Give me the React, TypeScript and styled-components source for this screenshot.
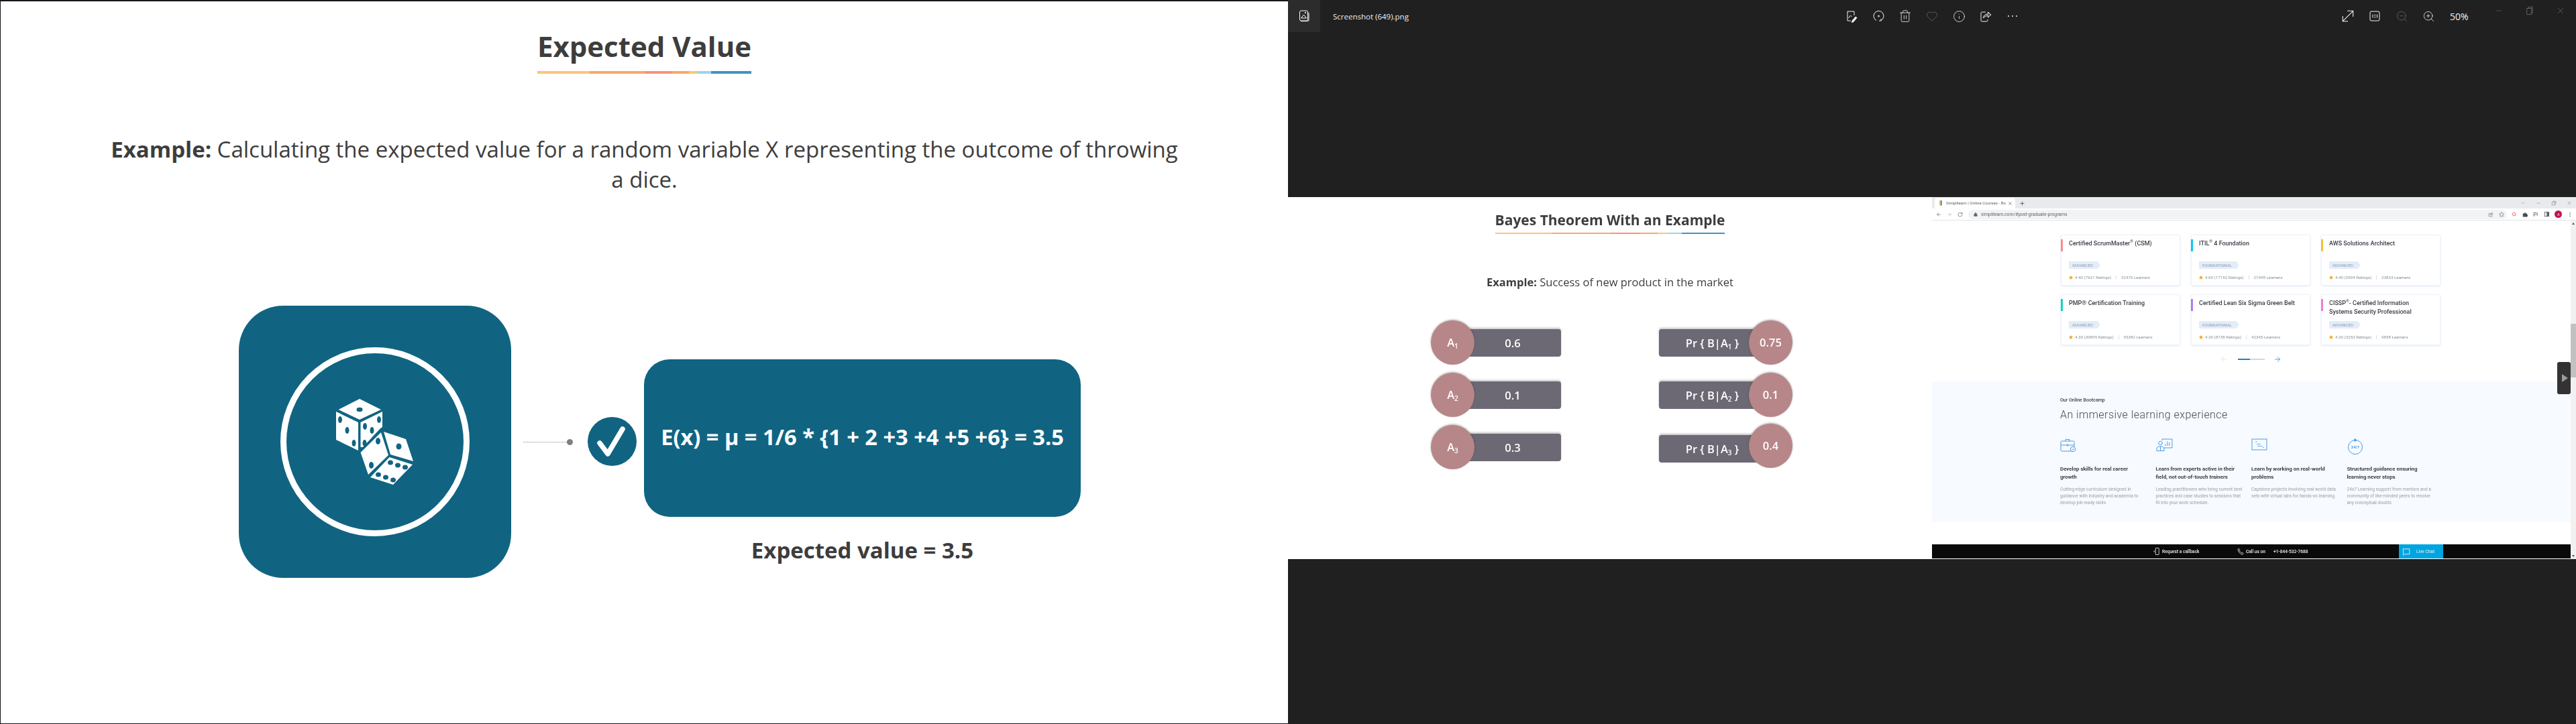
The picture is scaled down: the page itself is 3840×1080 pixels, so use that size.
import React from 'react'
import styled, { createGlobalStyle } from 'styled-components'
import { ArrowLeft, ArrowRight, ChevronDown, Heart, Info, Lock, Minus, MoreVertical, Plus, RotateCw, Star, Trash2, X, ZoomIn, ZoomOut } from 'lucide-react'

const GlobalStyle = createGlobalStyle`
  html, body {
    margin: 0;
    padding: 0;
    background: #202020;
  }
  * {
    box-sizing: border-box;
  }
`

const Page = styled.div`
  display: grid;
  grid-template-columns: 1920px 1920px;
  width: 3840px;
  height: 1080px;
  overflow: hidden;
  font-family: 'Open Sans', 'Liberation Sans', sans-serif;
`

/* left slide */
const MainSlide = styled.section`
  display: flex;
  flex-direction: column;
  align-items: center;
  height: 1080px;
  padding-top: 45px;
  background: #fff;
  border-top: 2px solid #14161a;
  border-left: 1px solid #14161a;
  border-bottom: 1px solid #14161a;
  color: #3d3d3d;
`

const SlideTitle = styled.div<{ $small?: boolean }>`
  display: flex;
  flex-direction: column;
  align-items: stretch;
  font-weight: 700;
  font-size: ${(p) => (p.$small ? '21px' : '42px')};
  line-height: ${(p) => (p.$small ? '24px' : '44px')};
  gap: ${(p) => (p.$small ? '7px' : '15px')};
  text-align: center;
  white-space: nowrap;
`

const RainbowRule = styled.div<{ $height: number }>`
  height: ${(p) => p.$height}px;
  background: linear-gradient(
    90deg,
    #fdc47a 0 24.6%,
    #fba66b 24.6% 50.4%,
    #f9927a 50.4% 63.1%,
    #fba66b 63.1% 70.8%,
    #fdc47a 70.8% 75%,
    #9cd4ee 75% 81.2%,
    #3f93c6 81.2% 100%
  );
`

const ExampleText = styled.p`
  width: 1600px;
  margin: 90px 0 0;
  font-size: 33px;
  line-height: 45px;
  text-align: center;

  b {
    font-weight: 700;
  }
`

const Diagram = styled.div`
  display: flex;
  align-items: flex-start;
  align-self: flex-start;
  margin: 166px 0 0 355px;
`

const DiceTile = styled.div`
  display: flex;
  align-items: center;
  justify-content: center;
  width: 406px;
  height: 406px;
  border-radius: 66px;
  background: #106482;
`

const DiceRing = styled.div`
  display: flex;
  align-items: center;
  justify-content: center;
  width: 282px;
  height: 282px;
  border: 9px solid #fff;
  border-radius: 50%;
`

const FormulaArea = styled.div`
  display: flex;
  align-items: flex-start;
  margin-top: 80px;
`

const Connector = styled.div`
  display: flex;
  align-items: center;
  width: 74px;
  height: 9px;
  margin: 119px 22px 0 18px;
`

const DottedLine = styled.div`
  flex: 1;
  border-top: 1px dotted #8a8a8a;
`

const ConnectorDot = styled.div`
  width: 9px;
  height: 9px;
  border-radius: 50%;
  background: #7f7f7f;
`

const CheckBadge = styled.div`
  display: flex;
  width: 73px;
  height: 73px;
  margin: 86px 11px 0 0;
  border-radius: 50%;
  background: #106482;
`

const FormulaColumn = styled.div`
  display: flex;
  flex-direction: column;
  align-items: center;
`

const FormulaBox = styled.div`
  display: flex;
  align-items: center;
  justify-content: center;
  width: 651px;
  height: 235px;
  padding-bottom: 4px;
  border-radius: 38px;
  background: #106482;
  color: #fff;
  font-size: 32.6px;
  font-weight: 700;
  white-space: nowrap;
`

const ResultText = styled.div`
  margin-top: 28px;
  font-size: 33px;
  line-height: 44px;
  font-weight: 700;
`

/* right side: photo viewer */
const Viewer = styled.section`
  display: flex;
  flex-direction: column;
  height: 1080px;
  background: #202020;
  color: #fff;
`

const ViewerBar = styled.header`
  display: flex;
  align-items: center;
  height: 48px;
  flex: none;
`

const AppTile = styled.div`
  display: flex;
  align-items: center;
  justify-content: center;
  width: 48px;
  height: 48px;
  background: #2c2c2c;
`

const FileName = styled.div`
  width: 772px;
  padding-left: 19px;
  font-size: 11.5px;
  color: #f0f0f0;
`

const ToolGroup = styled.div<{ $gapLeft?: number }>`
  display: flex;
  margin-left: ${(p) => p.$gapLeft ?? 0}px;
`

const ToolButton = styled.div<{ $dim?: boolean }>`
  display: flex;
  align-items: center;
  justify-content: center;
  width: 40px;
  height: 48px;
  color: ${(p) => (p.$dim ? '#6a6a6a' : '#f2f2f2')};
`

const ZoomLabel = styled.div`
  width: 50px;
  margin-left: 12px;
  font-size: 14px;
  color: #f2f2f2;
`

const WindowButtons = styled.div`
  display: flex;
  align-self: flex-start;
`

const WindowButton = styled.div`
  display: flex;
  align-items: center;
  justify-content: center;
  width: 46px;
  height: 32px;
  color: #7b7b7b;
`

const ShotRow = styled.div`
  display: grid;
  grid-template-columns: 960px 960px;
  height: 540px;
  margin-top: 246px;
`

const BayesSlide = styled.div`
  display: flex;
  flex-direction: column;
  align-items: center;
  padding-top: 22px;
  background: #fff;
  color: #3d3d3d;
  filter: blur(0.3px);
`

const BayesExample = styled.div`
  margin-top: 60px;
  font-size: 16.5px;
  line-height: 24px;

  b {
    font-weight: 700;
  }
`

const BayesGrid = styled.div`
  display: flex;
  gap: 146px;
  align-self: flex-start;
  margin: 45px 0 0 213px;
`

const BayesColumn = styled.div`
  display: flex;
  flex-direction: column;
  gap: 12px;
`

const BayesRow = styled.div<{ $lift?: number }>`
  display: flex;
  align-items: center;
  margin-top: ${(p) => -(p.$lift ?? 0)}px;
`

const Bubble = styled.div`
  position: relative;
  z-index: 1;
  flex: none;
  width: 65px;
  height: 66px;
  border-radius: 50%;
  background: #b78688;
  box-shadow: 0 -1px 3px rgba(60, 50, 50, 0.45);
  color: #fff;
  font-size: 16.5px;
  line-height: 66px;
  font-weight: 600;
  text-align: center;
`

const BayesBar = styled.div<{ $side: 'left' | 'right'; $drop?: number }>`
  height: 41px;
  margin-top: ${(p) => p.$drop ?? 0}px;
  border-radius: ${(p) => (p.$side === 'left' ? '0 4px 4px 0' : '4px 0 0 4px')};
  background: #6c6975;
  box-shadow: 0 -2px 3px rgba(90, 90, 90, 0.35);
  color: #fff;
  font-size: 16.5px;
  line-height: 41px;
  font-weight: 600;
  text-align: center;
  white-space: nowrap;
  ${(p) =>
    p.$side === 'left'
      ? 'width: 162px; margin-left: -33px; padding-left: 18px;'
      : 'width: 167px; margin-right: -33px; padding-right: 8px;'}
`

const Sub = styled.sub`
  font-size: 10px;
  line-height: 0;
  vertical-align: -3px;
`

/* browser inside the screenshot */
const BrowserShot = styled.div`
  display: flex;
  flex-direction: column;
  background: #fff;
  font-family: Roboto, 'Liberation Sans', sans-serif;
  filter: blur(0.4px);
`

const TabStrip = styled.div`
  display: flex;
  align-items: flex-end;
  height: 17px;
  padding-left: 4px;
  background: #e8eaed;
`

const ActiveTab = styled.div`
  display: flex;
  align-items: center;
  width: 120px;
  height: 16px;
  padding: 0 4px 0 7px;
  border-radius: 4px 4px 0 0;
  background: #fff;
  color: #5f6368;
  font-size: 6.2px;
  white-space: nowrap;
`

const TabFavicon = styled.div`
  flex: none;
  width: 4px;
  height: 8px;
  margin-right: 6px;
  border-radius: 0 0 2px 2px;
  background: linear-gradient(90deg, #f4b942 50%, #4a9be8 50%);
`

const TabTitle = styled.span`
  flex: 1;
  overflow: hidden;
`

const NewTab = styled.div`
  display: flex;
  align-items: center;
  height: 16px;
  margin-left: 6px;
  color: #444;
`

const ChromeControls = styled.div`
  display: flex;
  align-items: center;
  gap: 15px;
  height: 16px;
  margin: 0 6px 0 auto;
  color: #9a9da3;
`

const Toolbar = styled.div`
  display: flex;
  align-items: center;
  height: 18px;
  padding: 0 5px 0 6px;
  border-bottom: 1px solid #e3e5e8;
  background: #fff;
  color: #5f6368;
`

const NavIcons = styled.div`
  display: flex;
  align-items: center;
  gap: 8px;
  width: 48px;
`

const Omnibox = styled.div`
  display: flex;
  align-items: center;
  gap: 8px;
  width: 803px;
  height: 14px;
  padding: 0 4px 0 8px;
  border-radius: 7px;
  background: #f1f3f4;
  font-size: 6.8px;
  color: #5f6368;
`

const Address = styled.span`
  margin-left: -3px;
  flex: 1;
`

const ExtensionIcons = styled.div`
  display: flex;
  align-items: center;
  justify-content: space-between;
  width: 92px;
  margin-left: 6px;
`

const Avatar = styled.div`
  display: flex;
  align-items: center;
  justify-content: center;
  width: 11px;
  height: 11px;
  border-radius: 50%;
  background: #c2134f;
  color: #fff;
  font-size: 5px;
`

const Viewport = styled.div`
  position: relative;
  display: flex;
  flex: 1;
`

const PageContent = styled.div`
  display: flex;
  flex-direction: column;
  flex: 1;
`

const CardGrid = styled.div`
  display: grid;
  grid-template-columns: repeat(3, 178px);
  grid-auto-rows: 76px;
  column-gap: 16px;
  row-gap: 13px;
  margin: 21px 0 0 192px;
`

const Card = styled.div`
  position: relative;
  padding: 6px 15px 0 11px;
  border: 1px solid #edf3fb;
  border-radius: 2px;
  box-shadow: 0 1px 3px rgba(100, 150, 220, 0.2);
`

const CardAccent = styled.div<{ $color: string }>`
  position: absolute;
  top: 6px;
  left: -1px;
  width: 3px;
  height: 18px;
  background: ${(p) => p.$color};
`

const CardTitle = styled.div`
  height: 33px;
  font-size: 9px;
  line-height: 13px;
  font-weight: 500;
  color: #3a3d46;

  sup {
    font-size: 6px;
    line-height: 0;
    font-weight: 400;
  }
`

const LevelTag = styled.div`
  width: fit-content;
  height: 11px;
  padding: 0 11px 0 5px;
  background: #e3edf8;
  clip-path: polygon(0 0, calc(100% - 4px) 0, 100% 50%, calc(100% - 4px) 100%, 0 100%);
  color: #8b98ad;
  font-size: 6px;
  line-height: 11px;
`

const CardStats = styled.div`
  display: flex;
  align-items: center;
  height: 8px;
  margin-top: 9px;
  color: #8b8e96;
  font-size: 6.2px;
  white-space: nowrap;

  svg {
    margin-right: 3px;
  }
`

const StatDivider = styled.span`
  width: 1px;
  height: 6px;
  margin: 0 7px;
  background: #dcdfe4;
`

const Pager = styled.div`
  display: flex;
  align-items: center;
  height: 8px;
  margin: 17px 0 0 429px;
`

const PagerTrack = styled.div`
  width: 40px;
  height: 2px;
  margin: 0 13px 0 15px;
  background: #d6d6d6;
`

const PagerFill = styled.div`
  width: 18px;
  height: 2px;
  background: #1a7de0;
`

const LearningSection = styled.div`
  height: 210px;
  margin-top: 29px;
  padding: 23px 0 0 191px;
  background: #f7fafe;
`

const Eyebrow = styled.div`
  font-size: 7px;
  line-height: 10px;
  font-weight: 500;
  color: #3f424a;
`

const SectionHeading = styled.div`
  margin-top: 6px;
  font-size: 16px;
  line-height: 22px;
  font-weight: 300;
  letter-spacing: 0.45px;
  color: #474a52;
`

const FeatureGrid = styled.div`
  display: grid;
  grid-template-columns: repeat(4, 142.5px);
  margin-top: 24px;
`

const FeatureIcon = styled.div`
  height: 20px;
`

const FeatureTitle = styled.div`
  width: 122px;
  margin-top: 20px;
  font-size: 7.9px;
  line-height: 12px;
  font-weight: 700;
  color: #3a3d46;
`

const FeatureText = styled.div`
  width: 130px;
  margin-top: 7px;
  font-size: 6.6px;
  line-height: 10px;
  color: #9a9ea6;
`

const CallBar = styled.div`
  display: flex;
  align-items: center;
  height: 21px;
  margin-top: 33px;
  padding-left: 330px;
  background: #0a0a0a;
  color: #f2f2f2;
  font-size: 6.6px;
  font-weight: 500;
  white-space: nowrap;
`

const CallItem = styled.div<{ $width: number }>`
  display: flex;
  align-items: center;
  gap: 2px;
  width: ${(p) => p.$width}px;
`

const PhoneNumber = styled.span`
  margin-left: 10px;
`

const ChatButton = styled.div`
  display: flex;
  align-items: center;
  gap: 9px;
  align-self: stretch;
  width: 66px;
  padding-left: 5px;
  background: #00a5df;
  font-weight: 400;
`

const Scrollbar = styled.div`
  display: flex;
  flex-direction: column;
  align-items: center;
  justify-content: space-between;
  flex: none;
  width: 8px;
  padding: 3px 0;
  background: #f1f1f1;
`

const ScrollThumb = styled.div`
  position: absolute;
  top: 154px;
  right: 0;
  width: 8px;
  height: 80px;
  background: #c1c1c1;
`

const ScrollArrow = styled.div<{ $down?: boolean }>`
  width: 0;
  height: 0;
  border-left: 2px solid transparent;
  border-right: 2px solid transparent;
  ${(p) => (p.$down ? 'border-top: 3px solid #555;' : 'border-bottom: 3px solid #555;')}
`

const SideHandle = styled.div`
  position: absolute;
  top: 211px;
  right: 8px;
  display: flex;
  align-items: center;
  justify-content: center;
  width: 20px;
  height: 48px;
  border-radius: 3px;
  background: #333;
`

const HandleArrow = styled.div`
  width: 0;
  height: 0;
  margin-left: 2px;
  border-top: 6px solid transparent;
  border-bottom: 6px solid transparent;
  border-left: 9px solid #9a9a9a;
`

const DiceIcon = () => (
  <svg width="118" height="130" viewBox="0 0 118 130">
    <g fill="#fff">
      <polygon points="36,1 68,17 36,32 4.5,17" />
      <polygon points="1,20 34,36 34,78 1,62" />
      <polygon points="37.5,36 70,20 70,43 67,45 41,73 37.5,73" />
      <polygon points="68,51 79,85 49,114 37.5,81" />
      <polygon points="72,50 105,61 116,94 82,84" />
      <polygon points="80.5,88 115,99 86,129 52,118" />
    </g>
    <g fill="#106482">
      <ellipse cx="36" cy="17" rx="4.5" ry="3.2" />
      <ellipse cx="7" cy="32" rx="3" ry="5" />
      <ellipse cx="17.5" cy="48" rx="3" ry="5" />
      <ellipse cx="27.5" cy="67" rx="3" ry="5" />
      <ellipse cx="65" cy="32" rx="3" ry="5" />
      <ellipse cx="54.5" cy="48" rx="3" ry="5" />
      <ellipse cx="44" cy="42" rx="3" ry="5" />
      <ellipse cx="43.5" cy="67" rx="3" ry="5" />
      <ellipse cx="63.5" cy="64" rx="3.5" ry="5" />
      <ellipse cx="53.5" cy="100" rx="3.5" ry="5" />
      <ellipse cx="94.5" cy="72" rx="4" ry="4.5" />
      <ellipse cx="82" cy="96" rx="4" ry="3.6" />
      <ellipse cx="93" cy="100" rx="4" ry="3.6" />
      <ellipse cx="104" cy="103" rx="4" ry="3.6" />
      <ellipse cx="64" cy="114" rx="4" ry="3.6" />
      <ellipse cx="75" cy="118" rx="4" ry="3.6" />
      <ellipse cx="86" cy="122" rx="4" ry="3.6" />
    </g>
  </svg>
)

const CheckMark = () => (
  <svg width="73" height="73" viewBox="0 0 73 73">
    <path d="M18 39 L30 55 L52 18" fill="none" stroke="#fff" strokeWidth="7.5" strokeLinecap="round" strokeLinejoin="round" />
  </svg>
)

const Glyph = ({ children, size = 20 }: { children: React.ReactNode; size?: number }) => (
  <svg width={size} height={size} viewBox="0 0 20 20" fill="none" stroke="currentColor" strokeWidth="1">
    {children}
  </svg>
)

const cards = [
  { title: <>Certified ScrumMaster<sup>®</sup> (CSM)</>, accent: '#fb8b8b', level: 'ADVANCED', rating: '4.40 (7621 Ratings)', learners: '32476 Learners' },
  { title: <>ITIL<sup>®</sup> 4 Foundation</>, accent: '#10c8e8', level: 'FOUNDATIONAL', rating: '4.60 (17192 Ratings)', learners: '21498 Learners' },
  { title: <>AWS Solutions Architect</>, accent: '#f3bf3f', level: 'ADVANCED', rating: '4.40 (5594 Ratings)', learners: '23833 Learners' },
  { title: <>PMP® Certification Training</>, accent: '#0fd6bc', level: 'ADVANCED', rating: '4.30 (30895 Ratings)', learners: '95382 Learners' },
  { title: <>Certified Lean Six Sigma Green Belt</>, accent: '#a97ff0', level: 'FOUNDATIONAL', rating: '4.30 (8738 Ratings)', learners: '42345 Learners' },
  { title: <>CISSP<sup>®</sup>- Certified Information Systems Security Professional</>, accent: '#ee7ed2', level: 'ADVANCED', rating: '4.30 (3253 Ratings)', learners: '9858 Learners' },
]

const priors = [
  { id: 1, value: '0.6' },
  { id: 2, value: '0.1' },
  { id: 3, value: '0.3' },
]

const likelihoods = [
  { id: 1, value: '0.75', lift: 0, drop: 0 },
  { id: 2, value: '0.1', lift: 0, drop: 0 },
  { id: 3, value: '0.4', lift: 2, drop: 9 },
]

const BLUE = '#4a9be8'

const features = [
  {
    title: 'Develop skills for real career growth',
    text: 'Cutting-edge curriculum designed in guidance with industry and academia to develop job-ready skills',
    icon: (
      <svg width="24" height="21" viewBox="0 0 24 21" fill="none" stroke={BLUE}>
        <rect x="1" y="4" width="20" height="15" rx="1.5" />
        <path d="M8 4V1.5h6V4M1 10h20" />
        <circle cx="11" cy="10" r="1.2" fill="#fff" />
        <circle cx="19" cy="16" r="3.7" fill="#f7fafe" />
        <path d="M17.4 16l1.2 1.2 2-2.2" />
      </svg>
    ),
  },
  {
    title: 'Learn from experts active in their field, not out-of-touch trainers',
    text: 'Leading practitioners who bring current best practices and case studies to sessions that fit into your work schedule.',
    icon: (
      <svg width="25" height="20" viewBox="0 0 25 20" fill="none" stroke={BLUE}>
        <path d="M9 3V1h15v13H12" />
        <path d="M14 11V8M17 11V4.500M20 11V6" />
        <circle cx="6.5" cy="7" r="2.8" />
        <path d="M1 18.500v-3.500c0-2 2-3 5.500-3s5.500 1 5.500 3v3.500z" />
        <path d="M6.500 12v6" />
      </svg>
    ),
  },
  {
    title: 'Learn by working on real-world problems',
    text: 'Capstone projects involving real world data sets with virtual labs for hands-on learning',
    icon: (
      <svg width="24" height="18" viewBox="0 0 24 18" fill="none" stroke={BLUE}>
        <rect x="1" y="1" width="22" height="16" />
        <path d="M6 5h3M8 8.500h6M9 11.500h8M17 13.500h2" strokeWidth="0.8" />
      </svg>
    ),
  },
  {
    title: 'Structured guidance ensuring learning never stops',
    text: '24x7 Learning support from mentors and a community of like-minded peers to resolve any conceptual doubts',
    icon: (
      <svg width="24" height="24" viewBox="0 0 24 24" fill="none" stroke={BLUE}>
        <circle cx="12" cy="13" r="10.5" />
        <path d="M11 0.500l3 2-3 2z" fill={BLUE} />
        <text x="12" y="15" textAnchor="middle" fontSize="6" fontWeight="700" fill={BLUE} stroke="none" fontFamily="Roboto, sans-serif">24/7</text>
      </svg>
    ),
  },
]

const App: React.FC = () => {
  return (
    <Page>
      <GlobalStyle />
      <MainSlide>
        <SlideTitle>
          Expected Value
          <RainbowRule $height={4} />
        </SlideTitle>
        <ExampleText>
          <b>Example:</b> Calculating the expected value for a random variable X representing the outcome of throwing a dice.
        </ExampleText>
        <Diagram>
          <DiceTile>
            <DiceRing>
              <DiceIcon />
            </DiceRing>
          </DiceTile>
          <FormulaArea>
            <Connector>
              <DottedLine />
              <ConnectorDot />
            </Connector>
            <CheckBadge>
              <CheckMark />
            </CheckBadge>
            <FormulaColumn>
              <FormulaBox>{'E(x) = μ = 1/6 * {1 + 2 +3 +4 +5 +6} = 3.5'}</FormulaBox>
              <ResultText>Expected value = 3.5</ResultText>
            </FormulaColumn>
          </FormulaArea>
        </Diagram>
      </MainSlide>

      <Viewer>
        <ViewerBar>
          <AppTile>
            <Glyph size={20}>
              <rect x="3.5" y="2" width="12" height="15" rx="2" />
              <path d="M5 17.500h10.500a1.500 1.500 0 0 0 1.500-1.500V5" />
              <path d="M5.500 13l4-5 4 5z" />
              <circle cx="12" cy="5" r="0.8" />
            </Glyph>
          </AppTile>
          <FileName>Screenshot (649).png</FileName>
          <ToolGroup>
            <ToolButton>
              <Glyph>
                <path d="M14 9V3H4v14h5" />
                <path d="M5.500 13l3-4 2 2" />
                <path d="M11 17l5-6 2 1.500-5 6-2.500 1z" fill="currentColor" />
              </Glyph>
            </ToolButton>
            <ToolButton>
              <Glyph>
                <path d="M7 16.500A7.500 7.500 0 1 1 14 16.500" />
                <circle cx="10.5" cy="10" r="1" />
                <path d="M14 14v3h-3" />
              </Glyph>
            </ToolButton>
            <ToolButton><Trash2 size={20} strokeWidth={1} /></ToolButton>
            <ToolButton $dim><Heart size={18} strokeWidth={1} /></ToolButton>
            <ToolButton><Info size={19} strokeWidth={1} /></ToolButton>
            <ToolButton>
              <Glyph>
                <path d="M10 4H4.500a1.500 1.500 0 0 0-1.500 1.500v11a1.500 1.500 0 0 0 1.500 1.500h7a1.500 1.500 0 0 0 1.500-1.500V15" />
                <path d="M6.500 13c0-4 3-6 7-6V4l4.500 4-4.500 4V9.500c-3 0-5 1-7 3.500z" fill="currentColor" fillOpacity="0.2" />
              </Glyph>
            </ToolButton>
            <ToolButton>
              <Glyph size={20}>
                <circle cx="4" cy="10" r="1" fill="currentColor" stroke="none" />
                <circle cx="10" cy="10" r="1" fill="currentColor" stroke="none" />
                <circle cx="16" cy="10" r="1" fill="currentColor" stroke="none" />
              </Glyph>
            </ToolButton>
          </ToolGroup>
          <ToolGroup $gapLeft={460}>
            <ToolButton>
              <Glyph size={22}>
                <path d="M3 17L17 3M9 3h8v8M3 10v7h7" />
              </Glyph>
            </ToolButton>
            <ToolButton>
              <Glyph size={20}>
                <rect x="3" y="3" width="14" height="14" rx="2" />
                <path d="M7 7.500v5M13.500 7.500v5" />
                <circle cx="10.3" cy="8.500" r="0.5" fill="currentColor" />
                <circle cx="10.3" cy="11.500" r="0.5" fill="currentColor" />
              </Glyph>
            </ToolButton>
            <ToolButton $dim><ZoomOut size={19} strokeWidth={1} /></ToolButton>
            <ToolButton><ZoomIn size={19} strokeWidth={1} /></ToolButton>
          </ToolGroup>
          <ZoomLabel>50%</ZoomLabel>
          <WindowButtons>
            <WindowButton><Minus size={12} strokeWidth={1} /></WindowButton>
            <WindowButton>
              <Glyph size={14}>
                <rect x="4" y="5" width="10" height="13" />
                <path d="M7 5V2h9v13h-2" />
              </Glyph>
            </WindowButton>
            <WindowButton><X size={14} strokeWidth={1} /></WindowButton>
          </WindowButtons>
        </ViewerBar>

        <ShotRow>
          <BayesSlide>
            <SlideTitle $small>
              Bayes Theorem With an Example
              <RainbowRule $height={2} />
            </SlideTitle>
            <BayesExample>
              <b>Example:</b> Success of new product in the market
            </BayesExample>
            <BayesGrid>
              <BayesColumn>
                {priors.map((row) => (
                  <BayesRow key={row.id}>
                    <Bubble>A<Sub>{row.id}</Sub></Bubble>
                    <BayesBar $side="left">{row.value}</BayesBar>
                  </BayesRow>
                ))}
              </BayesColumn>
              <BayesColumn>
                {likelihoods.map((row) => (
                  <BayesRow key={row.id} $lift={row.lift}>
                    <BayesBar $side="right" $drop={row.drop}>Pr {'{'} B|A<Sub>{row.id}</Sub> {'}'}</BayesBar>
                    <Bubble>{row.value}</Bubble>
                  </BayesRow>
                ))}
              </BayesColumn>
            </BayesGrid>
          </BayesSlide>

          <BrowserShot>
            <TabStrip>
              <ActiveTab>
                <TabFavicon />
                <TabTitle>Simplilearn | Online Courses - Bo</TabTitle>
                <X size={7} color="#333" />
              </ActiveTab>
              <NewTab><Plus size={9} /></NewTab>
              <ChromeControls>
                <ChevronDown size={8} />
                <Minus size={8} />
                <Glyph size={8}>
                  <rect x="3" y="6" width="11" height="11" strokeWidth="2" />
                  <path d="M7 6V3h10v10h-3" strokeWidth="2" />
                </Glyph>
                <X size={8} />
              </ChromeControls>
            </TabStrip>
            <Toolbar>
              <NavIcons>
                <ArrowLeft size={8} />
                <ArrowRight size={8} color="#b8babd" />
                <RotateCw size={8} />
              </NavIcons>
              <Omnibox>
                <Lock size={6} fill="#5f6368" />
                <Address>simplilearn.com/#post-graduate-programs</Address>
                <Glyph size={8}>
                  <path d="M10 6H3v11h12v-5M8 12c0-4 3-6 6-6V3l4 4-4 4V8.500c-3 0-4 1-6 3.500z" strokeWidth="1.4" />
                </Glyph>
                <Star size={8} />
              </Omnibox>
              <ExtensionIcons>
                <Glyph size={9}>
                  <circle cx="10" cy="10" r="5" stroke="#fb6f73" strokeWidth="3" strokeDasharray="5 1.500" />
                </Glyph>
                <svg width="8" height="8" viewBox="0 0 20 20" fill="#4a4d52">
                  <path d="M2 6h5a3 3 0 0 1 6 0h5v5a3 3 0 0 1 0 6v2H2z" />
                </svg>
                <Glyph size={9}>
                  <path d="M2 5h12M2 10h12M2 15h7M16 5v10" strokeWidth="2" />
                </Glyph>
                <Glyph size={9}>
                  <rect x="3" y="3" width="14" height="14" strokeWidth="2" />
                  <rect x="10" y="3" width="7" height="14" fill="currentColor" />
                </Glyph>
                <Avatar>A</Avatar>
                <MoreVertical size={8} />
              </ExtensionIcons>
            </Toolbar>
            <Viewport>
              <PageContent>
                <CardGrid>
                  {cards.map((card, i) => (
                    <Card key={i}>
                      <CardAccent $color={card.accent} />
                      <CardTitle>{card.title}</CardTitle>
                      <LevelTag>{card.level}</LevelTag>
                      <CardStats>
                        <Star size={6} fill="#f5a623" color="#f5a623" />
                        {card.rating}
                        <StatDivider />
                        {card.learners}
                      </CardStats>
                    </Card>
                  ))}
                </CardGrid>
                <Pager>
                  <ArrowLeft size={12} color="#cfe0f5" strokeWidth={1.5} />
                  <PagerTrack>
                    <PagerFill />
                  </PagerTrack>
                  <ArrowRight size={12} color="#1a7de0" strokeWidth={1.5} />
                </Pager>
                <LearningSection>
                  <Eyebrow>Our Online Bootcamp</Eyebrow>
                  <SectionHeading>An immersive learning experience</SectionHeading>
                  <FeatureGrid>
                    {features.map((feature) => (
                      <div key={feature.title}>
                        <FeatureIcon>{feature.icon}</FeatureIcon>
                        <FeatureTitle>{feature.title}</FeatureTitle>
                        <FeatureText>{feature.text}</FeatureText>
                      </div>
                    ))}
                  </FeatureGrid>
                </LearningSection>
                <CallBar>
                  <CallItem $width={125}>
                    <Glyph size={11}>
                      <rect x="6" y="1" width="9" height="18" rx="1" strokeWidth="1.5" />
                      <path d="M4 8l-3 2 3 2" strokeWidth="1.5" />
                    </Glyph>
                    Request a callback
                  </CallItem>
                  <CallItem $width={241}>
                    <Glyph size={11}>
                      <path d="M4 2l3 3-1.500 2c1 3 3 5.500 6 7l2-1.500 3 3-2 3C8 18 2 11 2 4z" strokeWidth="1.5" />
                    </Glyph>
                    Call us on
                    <PhoneNumber>+1-844-532-7688</PhoneNumber>
                  </CallItem>
                  <ChatButton>
                    <Glyph size={12}>
                      <path d="M2 3h16v13H6l-3 3z" strokeWidth="1.5" />
                    </Glyph>
                    Live Chat
                  </ChatButton>
                </CallBar>
              </PageContent>
              <Scrollbar>
                <ScrollArrow />
                <ScrollArrow $down />
              </Scrollbar>
              <ScrollThumb />
              <SideHandle>
                <HandleArrow />
              </SideHandle>
            </Viewport>
          </BrowserShot>
        </ShotRow>
      </Viewer>
    </Page>
  )
}

export default App
